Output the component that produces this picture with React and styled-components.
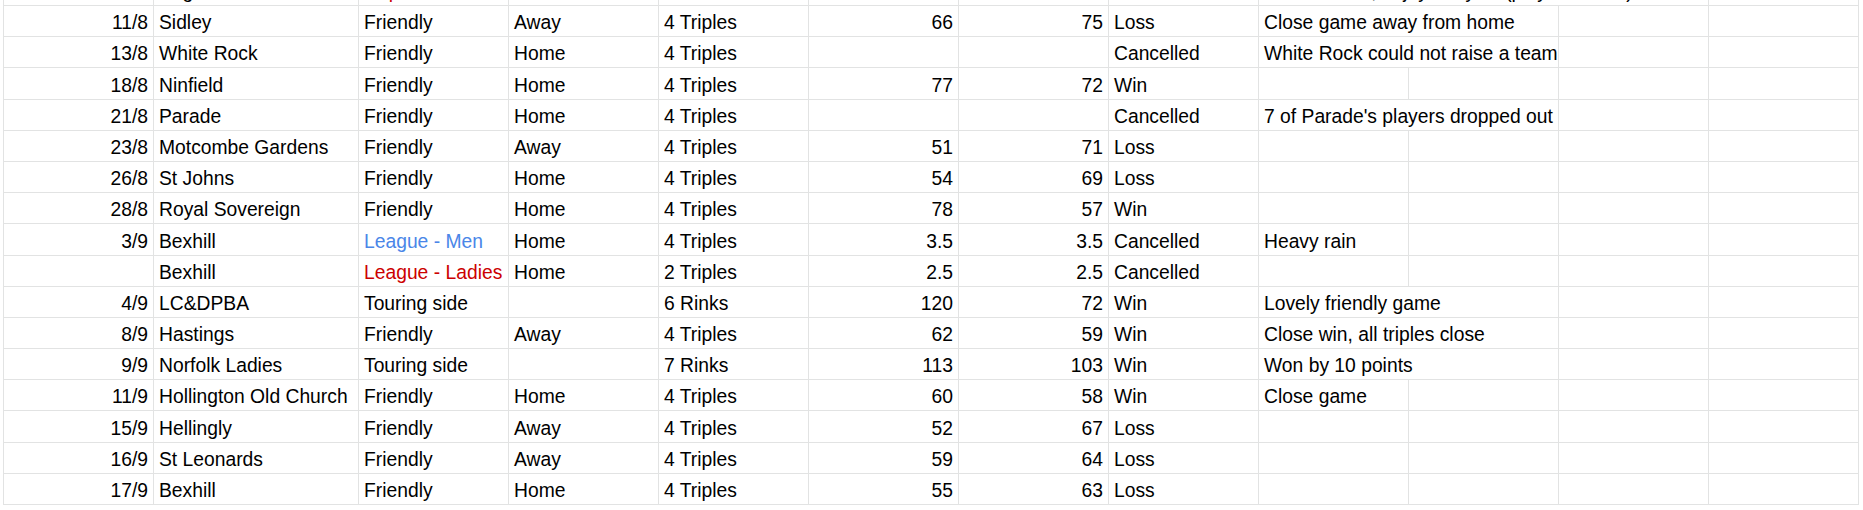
import React from "react";
import styled, { createGlobalStyle } from "styled-components";

const GlobalStyle = createGlobalStyle`
	html, body {
		margin: 0;
		padding: 0;
		background: #ffffff;
	}
	body {
		font-family: "Liberation Sans", Arial, sans-serif;
	}
`

const Viewport = styled.div`
	width: 1863px;
	height: 510px;
	overflow: hidden;
	background-color: #ffffff;
`

// scrolled so only the bottom edge of the row above 11/8 shows
const Sheet = styled.div`
	margin-top: -25.19px;
	margin-left: 3px;
	width: 1855px;
	border-left: 1px solid #e2e3e3;
`

const Row = styled.div`
	display: grid;
	grid-template-columns: 150px 205px repeat(10, 150px);
	height: 31.19px;
`

const Cell = styled.div`
	grid-column: span ${p => p.span || 1};
	box-sizing: border-box;
	display: flex;
	align-items: flex-end;
	justify-content: ${p => (p.right ? "flex-end" : "flex-start")};
	padding: 0 5px 2px;
	border-right: 1px solid #e2e3e3;
	border-bottom: 1px solid #e2e3e3;
	font-size: 19.3px;
	line-height: 23px;
	color: ${p => p.color || "#000000"};
	white-space: nowrap;
	overflow: visible;
`

const BLUE = "#4a86e8"
const RED = "#cc0000"

const matches = [
	{ date: "", team: "Bognor", type: "Cup", typeColor: RED, venue: "", format: "", us: "", them: "", result: "", note: "Close match, enjoyed by all (played in rain)", span: 3 },
	{ date: "11/8", team: "Sidley", type: "Friendly", venue: "Away", format: "4 Triples", us: "66", them: "75", result: "Loss", note: "Close game away from home", span: 2 },
	{ date: "13/8", team: "White Rock", type: "Friendly", venue: "Home", format: "4 Triples", us: "", them: "", result: "Cancelled", note: "White Rock could not raise a team", span: 2 },
	{ date: "18/8", team: "Ninfield", type: "Friendly", venue: "Home", format: "4 Triples", us: "77", them: "72", result: "Win", note: "" },
	{ date: "21/8", team: "Parade", type: "Friendly", venue: "Home", format: "4 Triples", us: "", them: "", result: "Cancelled", note: "7 of Parade's players dropped out", span: 2 },
	{ date: "23/8", team: "Motcombe Gardens", type: "Friendly", venue: "Away", format: "4 Triples", us: "51", them: "71", result: "Loss", note: "" },
	{ date: "26/8", team: "St Johns", type: "Friendly", venue: "Home", format: "4 Triples", us: "54", them: "69", result: "Loss", note: "" },
	{ date: "28/8", team: "Royal Sovereign", type: "Friendly", venue: "Home", format: "4 Triples", us: "78", them: "57", result: "Win", note: "" },
	{ date: "3/9", team: "Bexhill", type: "League - Men", typeColor: BLUE, venue: "Home", format: "4 Triples", us: "3.5", them: "3.5", result: "Cancelled", note: "Heavy rain" },
	{ date: "", team: "Bexhill", type: "League - Ladies", typeColor: RED, venue: "Home", format: "2 Triples", us: "2.5", them: "2.5", result: "Cancelled", note: "" },
	{ date: "4/9", team: "LC&DPBA", type: "Touring side", venue: "", format: "6 Rinks", us: "120", them: "72", result: "Win", note: "Lovely friendly game", span: 2 },
	{ date: "8/9", team: "Hastings", type: "Friendly", venue: "Away", format: "4 Triples", us: "62", them: "59", result: "Win", note: "Close win, all triples close", span: 2 },
	{ date: "9/9", team: "Norfolk Ladies", type: "Touring side", venue: "", format: "7 Rinks", us: "113", them: "103", result: "Win", note: "Won by 10 points", span: 2 },
	{ date: "11/9", team: "Hollington Old Church", type: "Friendly", venue: "Home", format: "4 Triples", us: "60", them: "58", result: "Win", note: "Close game" },
	{ date: "15/9", team: "Hellingly", type: "Friendly", venue: "Away", format: "4 Triples", us: "52", them: "67", result: "Loss", note: "" },
	{ date: "16/9", team: "St Leonards", type: "Friendly", venue: "Away", format: "4 Triples", us: "59", them: "64", result: "Loss", note: "" },
	{ date: "17/9", team: "Bexhill", type: "Friendly", venue: "Home", format: "4 Triples", us: "55", them: "63", result: "Loss", note: "" },
]

function MatchRow({ m }) {
	const span = m.span || 1
	const blanks = Array.from({ length: 4 - span })
	return <Row>
		<Cell right>{m.date}</Cell>
		<Cell>{m.team}</Cell>
		<Cell color={m.typeColor}>{m.type}</Cell>
		<Cell>{m.venue}</Cell>
		<Cell>{m.format}</Cell>
		<Cell right>{m.us}</Cell>
		<Cell right>{m.them}</Cell>
		<Cell>{m.result}</Cell>
		<Cell span={span}>{m.note}</Cell>
		{blanks.map((_, i) => <Cell key={i}></Cell>)}
	</Row>
}

export default function App() {
	return <Viewport>
		<GlobalStyle />
		<Sheet>
			{matches.map((m, i) => <MatchRow key={i} m={m} />)}
		</Sheet>
	</Viewport>
}
